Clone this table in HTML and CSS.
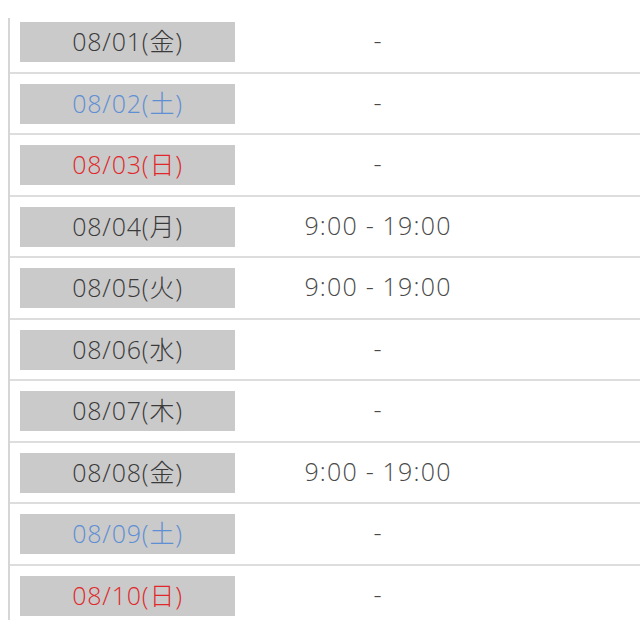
FILE: index.html
```html
<!DOCTYPE html>
<html lang="ja">
<head>
<meta charset="utf-8">
<link rel="stylesheet" href="styles.css">
</head>
<body>
<div class="schedule">
  <div class="row"><div class="date">08/01(金)</div><div class="hours">-</div></div>
  <div class="row"><div class="date sat">08/02(土)</div><div class="hours">-</div></div>
  <div class="row"><div class="date sun">08/03(日)</div><div class="hours">-</div></div>
  <div class="row"><div class="date">08/04(月)</div><div class="hours">9:00 - 19:00</div></div>
  <div class="row"><div class="date">08/05(火)</div><div class="hours">9:00 - 19:00</div></div>
  <div class="row"><div class="date">08/06(水)</div><div class="hours">-</div></div>
  <div class="row"><div class="date">08/07(木)</div><div class="hours">-</div></div>
  <div class="row"><div class="date">08/08(金)</div><div class="hours">9:00 - 19:00</div></div>
  <div class="row"><div class="date sat">08/09(土)</div><div class="hours">-</div></div>
  <div class="row"><div class="date sun">08/10(日)</div><div class="hours">-</div></div>
</div>
</body>
</html>
```
FILE: styles.css
```css
html, body {
  margin: 0;
  padding: 0;
  background: #ffffff;
}
body {
  font-family: "Open Sans", "Noto Sans CJK JP", sans-serif;
  font-weight: 300;
  color: #333333;
}
.schedule {
  margin-top: 18px;
  margin-left: 8px;
  border-left: 2px solid #d6d6d6;
  display: flex;
  flex-direction: column;
}
.row {
  display: flex;
  align-items: center;
  padding: 9.78px 0 9.78px 10px;
  border-bottom: 2px solid #dddddd;
}
.row:first-child {
  padding-top: 4px;
}
.row:last-child {
  border-bottom: none;
  padding-bottom: 4px;
}
.date {
  box-sizing: border-box;
  width: 215px;
  height: 40px;
  padding-bottom: 4px;
  background: #cacaca;
  display: flex;
  align-items: center;
  justify-content: center;
  font-size: 25px;
  letter-spacing: 0.8px;
  color: #3a3a3a;
}
.date.sat { color: #5e8fd4; }
.date.sun { color: #e0282a; }
.hours {
  box-sizing: border-box;
  width: 286px;
  height: 40px;
  padding-bottom: 4px;
  display: flex;
  align-items: center;
  justify-content: center;
  font-size: 25px;
  letter-spacing: 1.2px;
  color: #4a4a4a;
}
```
